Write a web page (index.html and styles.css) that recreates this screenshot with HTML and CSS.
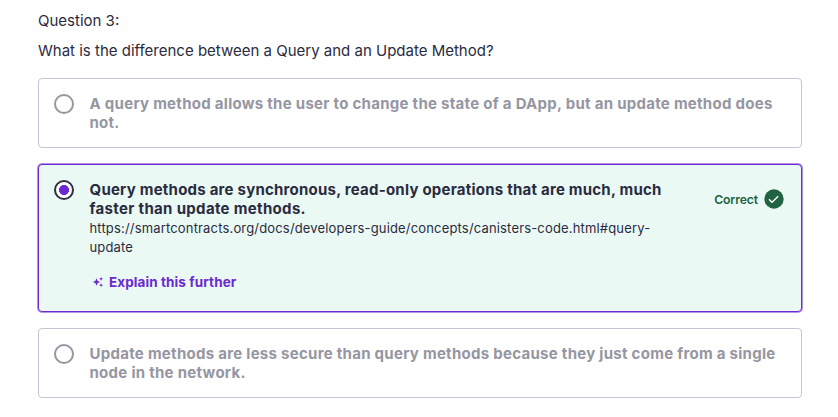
FILE: index.html
```
<!DOCTYPE html>
<html lang="en">
<head>
<meta charset="utf-8">
<title>Question 3</title>
<link rel="stylesheet" href="styles.css">
</head>
<body>
<main class="quiz">
  <p class="label">Question 3:</p>
  <p class="prompt">What is the difference between a Query and an Update Method?</p>
  <div class="answers">
    <div class="answer">
      <span class="radio"></span>
      <div class="body"><p class="text">A query method allows the user to change the state of a DApp, but an update method does<br>not.</p></div>
    </div>
    <div class="answer selected">
      <span class="radio"></span>
      <div class="body">
        <p class="text"><span class="wrap-first">Query methods are synchronous, read-only operations that are much, much</span><br><span class="wrap-last">faster than update methods.</span></p>
        <p class="note">https://smartcontracts.org/docs/developers-guide/concepts/canisters-code.html#query-<br>update</p>
        <div class="explain">
          <svg class="spark" viewBox="0 0 12 12"><path d="M4.5 2.3 5.7 4.9 8.4 6 5.7 7.1 4.5 9.7 3.3 7.1.7 6 3.3 4.9ZM9.1.9l.6 1.3 1.3.6-1.3.6-.6 1.3-.6-1.3-1.3-.6 1.3-.6ZM9.1 7.3l.6 1.3 1.3.6-1.3.6-.6 1.3-.6-1.3-1.3-.6 1.3-.6Z"/></svg>
          <span>Explain this further</span>
        </div>
      </div>
      <div class="status">
        <span>Correct</span>
        <svg class="check" viewBox="0 0 20 20"><circle cx="10" cy="10" r="9.7"/><path d="m5 10.3 3 3 6.2-6"/></svg>
      </div>
    </div>
    <div class="answer">
      <span class="radio"></span>
      <div class="body"><p class="text">Update methods are less secure than query methods because they just come from a single<br>node in the network.</p></div>
    </div>
  </div>
</main>
</body>
</html>
```
FILE: styles.css
```
* { box-sizing: border-box; }
body { margin: 0; background: #fff; color: #2a2b3f; font-family: Inter, "Liberation Sans", sans-serif; }
p { margin: 0; }
.quiz { padding: 11px 36px 0 38px; }
.label, .prompt { font-size: 15px; line-height: 20px; white-space: nowrap; }
.prompt { margin-top: 10px; }
.answers { display: flex; flex-direction: column; gap: 16px; margin-top: 17px; }
.answer { display: flex; height: 70px; border: 1px solid #c6c4d6; border-radius: 4px; padding: 15px; color: #9596a2; }
.answer.selected { height: 148px; border-color: #6d28d2; box-shadow: 0 0 0 1px #b594e8; background: #eaf9f4; color: #2a2b3f; }
.radio { flex: none; width: 20px; height: 20px; border: 2px solid #9596a2; border-radius: 50%; background: #fff; }
.selected .radio { border-color: #303141; background: radial-gradient(circle, #6d28d2 0 4.7px, #fff 5.3px); }
.body { flex: 1; margin-left: 15.5px; white-space: nowrap; }
.text { font-size: 15px; line-height: 19px; font-weight: 700; letter-spacing: .28px; }
.wrap-first { letter-spacing: .23px; }
.wrap-last { letter-spacing: .33px; }
.note { font-size: 13px; line-height: 19px; margin-top: 1px; letter-spacing: .165px; }
.explain { display: flex; align-items: center; gap: 5px; height: 18px; margin: 16px 0 0 2.5px; color: #6d28d2; font-size: 13.5px; font-weight: 700; letter-spacing: .09px; }
.spark { width: 12px; height: 12px; fill: #6d28d2; }
.status { display: flex; align-items: center; gap: 6px; height: 20px; margin: 9px 2px 0 0; color: #206241; font-size: 12.2px; font-weight: 600; letter-spacing: -.1px; }
.check { width: 20px; height: 20px; fill: #206241; }
.check path { fill: none; stroke: #fff; stroke-width: 1.4; }
```
